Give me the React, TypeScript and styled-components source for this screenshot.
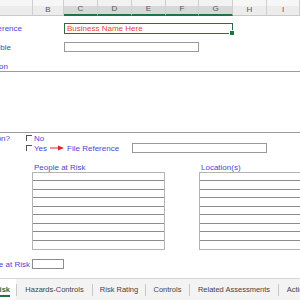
import styled, { createGlobalStyle } from "styled-components";

const GlobalStyle = createGlobalStyle`
  html, body {
    margin: 0;
    padding: 0;
    background: #ffffff;
  }
  body {
    font-family: "Liberation Sans", Arial, sans-serif;
  }
`;

const Sheet = styled.div`
  width: 300px;
  height: 300px;
  display: flex;
  flex-direction: column;
  overflow: hidden;
  background: #ffffff;
`;

const ColumnHeader = styled.div`
  display: flex;
  height: 16px;
  flex-shrink: 0;
  background: linear-gradient(#f6f6f6 0, #f6f6f6 6px, #ececec 6px);
  border-bottom: 1px solid #c9c9c9;
  box-sizing: border-box;
`;

const HeaderCell = styled.div<{ $width: number; $selected?: boolean }>`
  width: ${(p) => p.$width}px;
  flex-shrink: 0;
  box-sizing: border-box;
  display: flex;
  align-items: flex-end;
  justify-content: center;
  padding-bottom: 1px;
  font-size: 8px;
  color: #555;
  border-right: 1px solid #cfcfcf;
  background: ${(p) => (p.$selected ? "linear-gradient(#f2f2f2 0, #f2f2f2 6px, #d8d8d8 6px)" : "transparent")};
  border-bottom: ${(p) => (p.$selected ? "2px solid #217346" : "none")};
  margin-bottom: ${(p) => (p.$selected ? "-1px" : "0")};
  height: ${(p) => (p.$selected ? "16px" : "15px")};
`;

const Body = styled.div`
  flex: 1;
  display: flex;
  flex-direction: column;
`;

const Gap = styled.div<{ $h: number }>`
  height: ${(p) => p.$h}px;
  flex-shrink: 0;
`;

const FieldRow = styled.div<{ $h: number }>`
  display: grid;
  grid-template-columns: 64px 1fr;
  height: ${(p) => p.$h}px;
  align-items: center;
  flex-shrink: 0;
`;

const Label = styled.div<{ $end: number }>`
  width: ${(p) => p.$end}px;
  display: flex;
  justify-content: flex-end;
  overflow: hidden;
  white-space: nowrap;
  font-size: 8px;
  color: #4848d4;
`;

const Input = styled.div<{ $width: number; $active?: boolean }>`
  position: relative;
  width: ${(p) => p.$width}px;
  height: 100%;
  box-sizing: border-box;
  border: ${(p) => (p.$active ? "1.5px solid #217346" : "1px solid #9a9a9a")};
  display: flex;
  align-items: center;
  padding-left: 2px;
  font-size: 8px;
  color: #e5443c;
  white-space: nowrap;
`;

const FillHandle = styled.span`
  position: absolute;
  right: -3px;
  bottom: -3px;
  width: 4px;
  height: 4px;
  background: #217346;
  border: 1px solid #fff;
`;

const DescriptionArea = styled.div`
  height: 62px;
  flex-shrink: 0;
  box-sizing: border-box;
  border-top: 1px solid #9c9c9c;
  border-bottom: 1px solid #9c9c9c;
`;

const OptionRow = styled.div`
  display: grid;
  grid-template-columns: 26px auto;
  height: 10px;
  align-items: center;
  flex-shrink: 0;
`;

const Option = styled.div`
  display: flex;
  align-items: center;
  font-size: 8px;
  color: #4848d4;
  white-space: nowrap;
`;

const CheckBox = styled.span`
  width: 5px;
  height: 5px;
  border-top: 1px solid #555;
  border-left: 1px solid #555;
  margin-right: 2px;
`;

const Arrow = styled.svg`
  margin: 0 3px 0 3px;
`;

const FileBox = styled.div`
  width: 135px;
  height: 10px;
  box-sizing: border-box;
  border: 1px solid #9a9a9a;
  margin-left: 13px;
`;

const ListsRow = styled.div`
  display: grid;
  grid-template-columns: 32px 133px 34px 110px;
  flex-shrink: 0;
`;

const ListColumn = styled.div`
  display: flex;
  flex-direction: column;
`;

const ListHeading = styled.div`
  height: 10px;
  display: flex;
  align-items: center;
  padding-left: 2px;
  font-size: 8px;
  color: #4848d4;
  white-space: nowrap;
`;

const ListBox = styled.div`
  height: 78px;
  box-sizing: border-box;
  border: 1px solid #b4b4b4;
  display: grid;
  grid-template-rows: repeat(9, 1fr);
`;

const ListLine = styled.div`
  border-bottom: 1px solid #8c8c8c;
  &:last-child {
    border-bottom: none;
  }
`;

const SmallBox = styled.div`
  width: 32px;
  height: 100%;
  box-sizing: border-box;
  border: 1px solid #8c8c8c;
`;

const CountRow = styled.div`
  display: grid;
  grid-template-columns: 32px 1fr;
  height: 10px;
  align-items: center;
  flex-shrink: 0;
`;

const TabBar = styled.div`
  height: 22px;
  flex-shrink: 0;
  display: flex;
  align-items: center;
  background: #f3f3f3;
  border-top: 1px solid #d6d6d6;
  box-sizing: border-box;
`;

const Tab = styled.div<{ $width: number; $active?: boolean }>`
  width: ${(p) => p.$width}px;
  flex-shrink: 0;
  height: 100%;
  box-sizing: border-box;
  display: flex;
  align-items: center;
  justify-content: ${(p) => (p.$active ? "flex-end" : "center")};
  overflow: hidden;
  white-space: nowrap;
  font-size: 7.5px;
  color: ${(p) => (p.$active ? "#217346" : "#444")};
  font-weight: ${(p) => (p.$active ? "bold" : "normal")};
  background: ${(p) => (p.$active ? "#ffffff" : "transparent")};
  padding-right: ${(p) => (p.$active ? "6px" : "0")};
`;

const ActiveText = styled.span`
  border-bottom: 2px solid #217346;
  padding-bottom: 1px;
  margin-top: 3px;
`;

const TabDivider = styled.span`
  width: 1px;
  height: 12px;
  background: #c8c8c8;
  flex-shrink: 0;
`;

const columns = [
  { label: "", width: 33 },
  { label: "B", width: 31 },
  { label: "C", width: 34, selected: true },
  { label: "D", width: 34, selected: true },
  { label: "E", width: 34, selected: true },
  { label: "F", width: 33, selected: true },
  { label: "G", width: 34, selected: true },
  { label: "H", width: 34 },
  { label: "I", width: 33 },
];

const tabs = [
  { label: "Hazards-Controls", width: 75 },
  { label: "Risk Rating", width: 52 },
  { label: "Controls", width: 43 },
  { label: "Related Assessments", width: 88 },
  { label: "Actions", width: 40 },
];

const lines = Array.from({ length: 9 });

const App = () => {
  return (
    <Sheet>
      <GlobalStyle />
      <ColumnHeader>
        {columns.map((c, i) => (
          <HeaderCell key={i} $width={c.width} $selected={c.selected}>
            {c.label}
          </HeaderCell>
        ))}
      </ColumnHeader>
      <Body>
        <Gap $h={7} />
        <FieldRow $h={11}>
          <Label $end={22}>Reference</Label>
          <Input $width={169} $active>
            Business Name Here
            <FillHandle />
          </Input>
        </FieldRow>
        <Gap $h={8} />
        <FieldRow $h={10}>
          <Label $end={11}>Responsible</Label>
          <Input $width={135} />
        </FieldRow>
        <Gap $h={9} />
        <FieldRow $h={10}>
          <Label $end={8}>Description</Label>
        </FieldRow>
        <DescriptionArea />
        <OptionRow>
          <Label $end={10}>Information?</Label>
          <Option>
            <CheckBox />
            No
          </Option>
        </OptionRow>
        <OptionRow>
          <span />
          <Option>
            <CheckBox />
            Yes
            <Arrow width="14" height="6" viewBox="0 0 14 6">
              <line x1="0" y1="3" x2="9" y2="3" stroke="#e02424" strokeWidth="1" />
              <polygon points="8,0.5 14,3 8,5.5" fill="#e02424" />
            </Arrow>
            File Reference
            <FileBox />
          </Option>
        </OptionRow>
        <Gap $h={9} />
        <ListsRow>
          <span />
          <ListColumn>
            <ListHeading>People at Risk</ListHeading>
            <ListBox>
              {lines.map((_, i) => (
                <ListLine key={i} />
              ))}
            </ListBox>
          </ListColumn>
          <span />
          <ListColumn>
            <ListHeading>Location(s)</ListHeading>
            <ListBox>
              {lines.map((_, i) => (
                <ListLine key={i} />
              ))}
            </ListBox>
          </ListColumn>
        </ListsRow>
        <Gap $h={9} />
        <CountRow>
          <Label $end={30}>People at Risk</Label>
          <SmallBox />
        </CountRow>
      </Body>
      <TabBar>
        <Tab $width={16} $active>
          <ActiveText>Risk</ActiveText>
        </Tab>
        {tabs.map((t) => (
          <>
            <TabDivider key={t.label + "-d"} />
            <Tab key={t.label} $width={t.width}>
              {t.label}
            </Tab>
          </>
        ))}
      </TabBar>
    </Sheet>
  );
};

export default App;
